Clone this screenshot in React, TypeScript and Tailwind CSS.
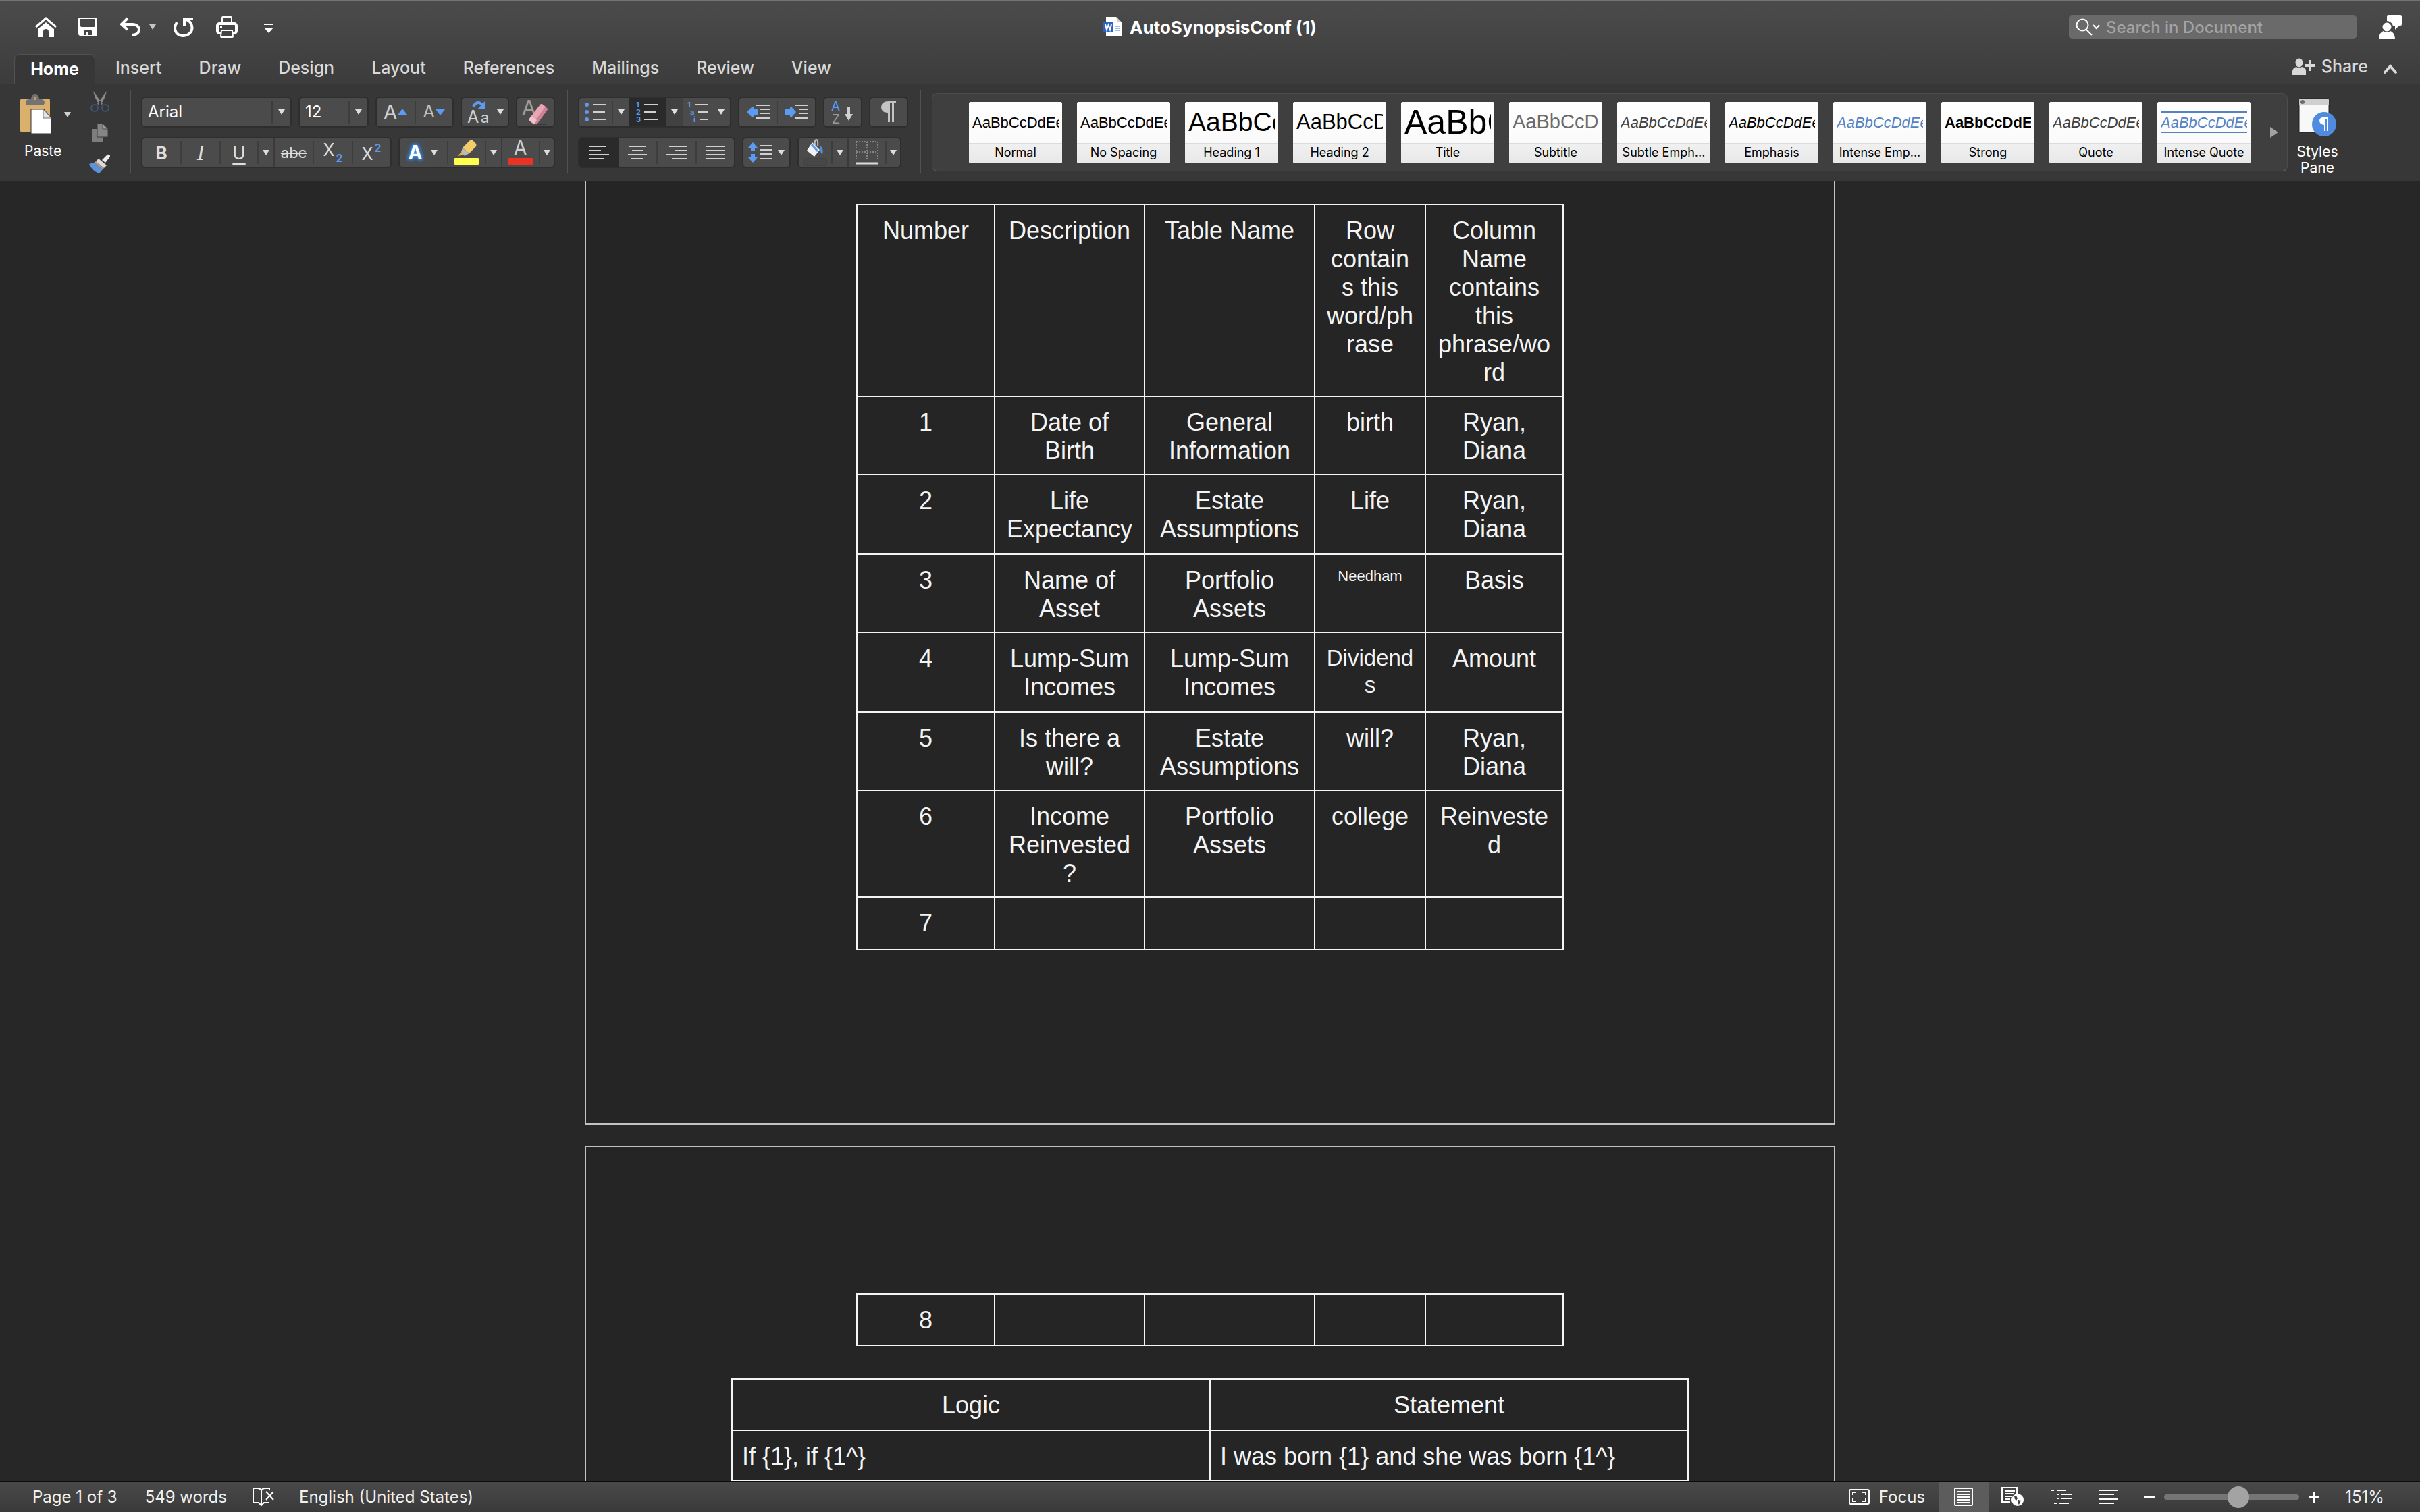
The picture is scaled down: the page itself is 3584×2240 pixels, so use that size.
import React from "react";

type Kids = { children?: React.ReactNode };

const Caret = ({ className = "" }: { className?: string }) => (
  <svg width="12" height="10" viewBox="0 0 12 10" className={`shrink-0 ${className}`} aria-hidden="true">
    <path d="M1 1H11L6 9Z" fill="currentColor" />
  </svg>
);

const Svg = ({ w, h, children, className = "" }: Kids & { w: number; h: number; className?: string }) => (
  <svg width={w} height={h} viewBox={`0 0 ${w} ${h}`} fill="none" className={`shrink-0 overflow-visible ${className}`} aria-hidden="true">
    {children}
  </svg>
);

/* ---------- Quick access toolbar icons ---------- */

const HomeIcon = () => (
  <Svg w={32} h={30}>
    <path d="M1 15L16 2L31 15" stroke="#fff" strokeWidth="3" />
    <path d="M4 18L16 8L28 18V30H20V22Q20 18 16 18Q12 18 12 22V30H4Z" fill="#fff" />
  </Svg>
);
const SaveIcon = () => (
  <Svg w={28} h={28}>
    <path
      fillRule="evenodd"
      d="M2 0H26Q28 0 28 2V26Q28 28 26 28H3L0 25V2Q0 0 2 0ZM3 2V12Q3 14 5 14H23Q25 14 25 12V2ZM9 19Q8 19 8 20V26H12V22H15V26H20V20Q20 19 19 19Z"
      fill="#fff"
    />
  </Svg>
);
const UndoIcon = () => (
  <Svg w={32} h={30}>
    <path d="M12 2L3 11L12 19" stroke="#fff" strokeWidth="4" />
    <path d="M3 11H19C32 11 33 27 18 27" stroke="#fff" strokeWidth="4" />
  </Svg>
);
const RepeatIcon = () => (
  <Svg w={32} h={32}>
    <path d="M6 9C-2 22 8 29 15 29C25 29 30 21 28 14C27 9 24 6 18 4" stroke="#fff" strokeWidth="4" />
    <path d="M30 4H17V14" stroke="#fff" strokeWidth="4" />
  </Svg>
);
const PrintIcon = () => (
  <Svg w={32} h={32}>
    <path d="M9 10V2Q9 1 10 1H22Q23 1 23 2V10" stroke="#fff" strokeWidth="2" />
    <rect x="2" y="11" width="28" height="14" rx="3" fill="#464646" stroke="#fff" strokeWidth="4" />
    <rect x="6" y="15" width="3" height="3" fill="#fff" />
    <path d="M8 21H24L25 30Q25 31 24 31H8Q7 31 7 30Z" fill="#444" stroke="#fff" strokeWidth="2" />
  </Svg>
);
const CustomizeIcon = () => (
  <Svg w={16} h={16}>
    <path d="M1 2H15" stroke="#fff" strokeWidth="2" />
    <path d="M1 7H15L8 15Z" fill="#fff" />
  </Svg>
);
const WordFileIcon = () => (
  <Svg w={28} h={30}>
    <path d="M4 0H19L27 8V29H4Z" fill="#fff" />
    <path d="M19 0L21 7L27 8Z" fill="#cfcfcf" />
    <path d="M17 14H24M17 17H24M17 20H24" stroke="#3b7ddd" strokeWidth="1" />
    <rect x="0" y="8" width="15" height="15" rx="1" fill="#2b63c1" />
    <path d="M3 11L5 19L7.500 12L10 19L12 11" stroke="#fff" strokeWidth="2" />
  </Svg>
);
const PersonIcon = () => (
  <Svg w={36} h={36}>
    <path d="M13 2Q13 0 15 0H33Q35 0 35 2V14Q35 16 33 16H31L25 22V16H13Z" fill="#fff" />
    <circle cx="13" cy="18" r="9" fill="#444" />
    <circle cx="13" cy="18" r="6.500" fill="#fff" />
    <path d="M1 36C1 28 5 25 8 24Q13 28 18 24C21 25 25 28 25 36Z" fill="#fff" />
  </Svg>
);
const ShareIcon = () => (
  <Svg w={34} h={26}>
    <ellipse cx="10" cy="7" rx="5.500" ry="6.500" fill="#d8d8d8" />
    <path d="M0 25V19Q1 14 6 13Q10 16 14 13Q20 14 20 19V25Z" fill="#d8d8d8" />
    <path d="M18 11H34M26 3V19" stroke="#d8d8d8" strokeWidth="4" />
  </Svg>
);

/* ---------- Ribbon building blocks ---------- */

const Group = ({ children, className = "" }: Kids & { className?: string }) => (
  <div className={`flex h-[46px] shrink-0 items-stretch overflow-hidden rounded-[6px] border-2 border-[#2e2e2e] bg-[#4b4b4b] ${className}`}>{children}</div>
);
const Sep = ({ full = false }: { full?: boolean }) => (
  <span className={full ? "w-[2px] shrink-0 bg-[#3a3a3a]" : "my-[4px] w-[2px] shrink-0 bg-[#3d3d3d]"} />
);
const Btn = ({ label, children, className = "" }: Kids & { label: string; className?: string }) => (
  <button type="button" aria-label={label} className={`flex shrink-0 items-center justify-center text-[#dedede] ${className}`}>
    {children}
  </button>
);
const Divider = () => <span className="mt-[9px] h-[123px] w-[2px] shrink-0 bg-[#525252]" />;

const B = "#5b9bf3";
const G = "#d0d0d0";

const Lines = ({ d, w, h }: { d: string; w: number; h: number }) => (
  <Svg w={w} h={h}>
    <path d={d} stroke={G} strokeWidth="2" />
  </Svg>
);

const Clipboard = () => (
  <Svg w={48} h={60}>
    <rect x="0" y="6" width="44" height="50" rx="3" fill="#d9b06c" />
    <path d="M8 12Q8 7 14 7H16Q16 0 22 0Q28 0 28 7H30Q36 7 36 12Q36 16 31 16H13Q8 16 8 12Z" fill="#737373" />
    <circle cx="22" cy="6" r="2" fill="#c9a262" />
    <path d="M16 22H35L46 35V58H16Z" fill="#fff" stroke="#333" strokeWidth="1" />
    <path d="M34 22V35H46Z" fill="#e4e4e4" stroke="#777" strokeWidth="1" />
  </Svg>
);
const Scissors = () => (
  <Svg w={30} h={32}>
    <path d="M5 1L19 20L15 22Q7 12 5 1ZM25 1L11 20L15 22Q23 12 25 1Z" fill="#8a8a8a" />
    <circle cx="7" cy="26" r="5" stroke="#3c5478" strokeWidth="2" />
    <circle cx="23" cy="26" r="5" stroke="#3c5478" strokeWidth="2" />
  </Svg>
);
const CopyIcon = () => (
  <Svg w={26} h={30}>
    <path d="M1 9H17V29H1Z" fill="#7d7d7d" />
    <path d="M9 1H18L25 9V21H9Z" fill="#858585" stroke="#3a3a3a" strokeWidth="1" />
    <path d="M17 1V9H25Z" fill="#9a9a9a" stroke="#4a4a4a" strokeWidth="1" />
  </Svg>
);
const BrushIcon = () => (
  <Svg w={32} h={30}>
    <path d="M27 1Q31 0 31 4L24 13L19 9Z" fill="#ececec" />
    <path d="M14 7L26 17L22 21L10 11Z" fill="#dcdcdc" />
    <path d="M10 11L22 21L20 23L7 13Z" fill="#b79a78" />
    <path d="M7 13L20 23L15 29Q4 25 0 15Z" fill="#5b94dd" />
  </Svg>
);
const EraserIcon = () => (
  <Svg w={42} h={40}>
    <text x="1" y="24" fontFamily="Inter" fontSize="30" fill="#9d9d98">A</text>
    <path d="M12 30L28 9Q30 7 32 9L38 14Q40 16 38 18L24 37Q21 39 18 37L12 33Q10 32 12 30Z" fill="#cf8194" />
    <path d="M12 30L28 9Q30 7 32 9L36 12L19 34Z" fill="#e9a5b5" />
    <path d="M12 30L15 26L23 32L20 37Q18 38 16 36L12 33Q10 32 12 30Z" fill="#efc3cd" />
    <path d="M24 38H38" stroke="#2c2c2c" strokeWidth="1" />
  </Svg>
);
const BulletsIcon = () => (
  <Svg w={34} h={30}>
    <g fill={B}><circle cx="4" cy="4" r="3" /><circle cx="4" cy="15" r="3" /><circle cx="4" cy="26" r="3" /></g>
    <path d="M13 4H33M13 15H31M13 26H33" stroke={G} strokeWidth="2" />
  </Svg>
);
const NumbersIcon = () => (
  <Svg w={34} h={30}>
    <g fill={B} fontFamily="Inter" fontSize="11" fontWeight="700"><text x="0" y="8">1</text><text x="0" y="19">2</text><text x="0" y="30">3</text></g>
    <path d="M12 4H32M12 15H30M12 26H32" stroke={G} strokeWidth="2" />
  </Svg>
);
const MultiIcon = () => (
  <Svg w={34} h={30}>
    <g fill={B} fontFamily="Inter" fontSize="11" fontWeight="700"><text x="0" y="8">1</text><text x="4" y="19">a</text><text x="9" y="30">i</text></g>
    <path d="M11 4H31M15 15H31M19 26H31" stroke={G} strokeWidth="2" />
  </Svg>
);
const IndentIcon = ({ right = false }: { right?: boolean }) => (
  <Svg w={36} h={24}>
    <path d={right ? "M17 12L10 4H8V8H1V16H8V20H10Z" : "M1 12L9 4H11V8H17V16H11V20H9Z"} fill={B} />
    <path d="M15 2H35M21 8H35M21 14H35M15 21H35" stroke={G} strokeWidth="2" />
  </Svg>
);
const SortIcon = () => (
  <Svg w={36} h={38}>
    <text x="1" y="17" fontFamily="Inter" fontSize="19" fill={B}>A</text>
    <text x="2" y="36" fontFamily="Inter" fontSize="19" fill="#9a9a9a">Z</text>
    <path d="M27 11V24" stroke={G} strokeWidth="4" />
    <path d="M21 22H33L27 32Z" fill={G} />
  </Svg>
);
const SpacingIcon = () => (
  <Svg w={38} h={30}>
    <path d="M8 0L15 8V9H11V13H5V9H1V8ZM8 30L15 22V21H11V17H5V21H1V22Z" fill={B} />
    <path d="M19 5H37M19 11H37M19 17H37M19 24H37" stroke={G} strokeWidth="2" />
  </Svg>
);
const BucketIcon = () => (
  <Svg w={36} h={40}>
    <path d="M14 5L25 16L17 26L6 17Z" fill="#f2f2f2" />
    <path d="M18 9Q17 1 20 1Q23 1 22 11" stroke="#bdbdbd" strokeWidth="2" />
    <path d="M13 8L22 18" stroke={B} strokeWidth="3" />
    <path d="M24 10Q32 12 29 23Q26 21 26 15Z" fill="#4f8fe8" />
    <rect x="1" y="29" width="34" height="10" rx="2" fill="#474747" stroke="#3a3a3a" />
  </Svg>
);
const BordersIcon = () => (
  <Svg w={36} h={36}>
    <path d="M2 2H34M2 17H34M2 2V31M18 2V31M34 2V31" stroke="#858585" strokeWidth="2" strokeDasharray="2 2" />
    <path d="M1 34H35" stroke="#dcdcdc" strokeWidth="3" />
  </Svg>
);
const HighlightIcon = () => (
  <Svg w={38} h={38}>
    <path d="M24 1Q26 0 28 1L33 6Q34 8 33 10L23 20L13 12Z" fill="#f3cd69" />
    <path d="M13 12L23 20L16 24L11 18Z" fill="#b9b9b9" />
    <path d="M11 18L15 22L6 24Z" fill="#e0b34c" />
    <rect x="1" y="27" width="36" height="10" rx="1" fill="#ffff4f" />
  </Svg>
);
const FontColorIcon = () => (
  <Svg w={38} h={38}>
    <text x="9" y="22" fontFamily="Inter" fontSize="28" fill={G}>A</text>
    <rect x="1" y="27" width="36" height="10" rx="1" fill="#e93323" />
  </Svg>
);
const StylesPaneIcon = () => (
  <Svg w={58} h={60}>
    <path d="M2 3Q2 1 4 1H44Q46 1 46 3V51H2Z" fill="#f8f8f8" stroke="#222" strokeWidth="1" />
    <path d="M2 3Q2 1 4 1H44Q46 1 46 3V11H2Z" fill="#cfcfcf" />
    <circle cx="7" cy="6" r="3" fill="#6b6b6b" />
    <circle cx="39" cy="39" r="18" fill="#4f8ce0" />
    <path d="M38 29H45V49H43V31H41V49H39V40Q32 39 32 34Q32 29 38 29Z" fill="#fff" />
  </Svg>
);

/* ---------- Data ---------- */

const tabs = ["Insert", "Draw", "Design", "Layout", "References", "Mailings", "Review", "View"];

const styles: { name: string; cls: string; ruled?: boolean }[] = [
  { name: "Normal", cls: "text-[22px] text-black" },
  { name: "No Spacing", cls: "text-[22px] text-black" },
  { name: "Heading 1", cls: "text-[39px] text-black" },
  { name: "Heading 2", cls: "text-[31px] text-black" },
  { name: "Title", cls: "text-[50px] text-black" },
  { name: "Subtitle", cls: "text-[29px] text-[#6b6b6b]" },
  { name: "Subtle Emph...", cls: "text-[22px] italic text-[#404040]" },
  { name: "Emphasis", cls: "text-[22px] italic text-black" },
  { name: "Intense Emp...", cls: "text-[22px] italic text-[#5482c4]" },
  { name: "Strong", cls: "text-[22px] font-bold text-black" },
  { name: "Quote", cls: "text-[22px] italic text-[#404040]" },
  { name: "Intense Quote", cls: "text-[22px] italic text-[#5482c4]", ruled: true },
];

const head = ["Number", "Description", "Table Name", "Row\ncontain\ns this\nword/ph\nrase", "Column\nName\ncontains\nthis\nphrase/wo\nrd"];
const rows: { h: string; cells: string[] }[] = [
  { h: "h-[116px]", cells: ["1", "Date of\nBirth", "General\nInformation", "birth", "Ryan,\nDiana"] },
  { h: "h-[118px]", cells: ["2", "Life\nExpectancy", "Estate\nAssumptions", "Life", "Ryan,\nDiana"] },
  { h: "h-[116px]", cells: ["3", "Name of\nAsset", "Portfolio\nAssets", "Needham", "Basis"] },
  { h: "h-[118px]", cells: ["4", "Lump-Sum\nIncomes", "Lump-Sum\nIncomes", "Dividend\ns", "Amount"] },
  { h: "h-[116px]", cells: ["5", "Is there a\nwill?", "Estate\nAssumptions", "will?", "Ryan,\nDiana"] },
  { h: "h-[158px]", cells: ["6", "Income\nReinvested\n?", "Portfolio\nAssets", "college", "Reinveste\nd"] },
  { h: "h-[78px]", cells: ["7", "", "", "", ""] },
];
const cell = "border-2 border-[#f4f4f4] pt-[17px] pb-[13px] align-top font-normal whitespace-pre-line";
const cellSize: Record<string, string> = {
  Needham: "text-[22px] leading-[30px]",
  "Dividend\ns": "text-[33px] leading-[40px]",
};

const Cols = () => (
  <colgroup>
    <col className="w-[204px]" />
    <col className="w-[222px]" />
    <col className="w-[252px]" />
    <col className="w-[164px]" />
    <col className="w-[204px]" />
  </colgroup>
);

/* ---------- Sections ---------- */

function TitleBar() {
  return (
    <div className="grid h-[76px] grid-cols-[1fr_auto_1fr] items-center px-[26px]">
      <div className="ml-[26px] flex items-center">
        <button type="button" aria-label="Home"><HomeIcon /></button>
        <button type="button" aria-label="Save" className="ml-[32px]"><SaveIcon /></button>
        <button type="button" aria-label="Undo" className="ml-[33px] flex items-center gap-[11px] text-[#c4c4c4]"><UndoIcon /><Caret /></button>
        <button type="button" aria-label="Repeat" className="ml-[24px]"><RepeatIcon /></button>
        <button type="button" aria-label="Print" className="ml-[32px]"><PrintIcon /></button>
        <button type="button" aria-label="Customize toolbar" className="mt-[4px] ml-[38px]"><CustomizeIcon /></button>
      </div>
      <h1 className="flex items-center gap-[11px] text-[26px] font-bold text-white"><WordFileIcon />AutoSynopsisConf (1)</h1>
      <div className="flex items-center justify-end gap-[32px]">
        <label className="flex h-[36px] w-[426px] items-center rounded-[5px] bg-[#6a6a6a] pl-[10px]">
          <Svg w={36} h={26}>
            <circle cx="10" cy="10" r="8.500" stroke="#fff" strokeWidth="2" />
            <path d="M16 17L24 25" stroke="#fff" strokeWidth="2" />
            <path d="M26 10L30.500 15L35 10" stroke="#fff" strokeWidth="2" />
          </Svg>
          <input type="text" aria-label="Search in Document" placeholder="Search in Document" className="ml-[9px] w-full min-w-0 bg-transparent pt-[2px] text-[24px] font-medium text-white outline-none placeholder:text-[#a3a3a3]" />
        </label>
        <button type="button" aria-label="Account"><PersonIcon /></button>
      </div>
    </div>
  );
}

function TabBar() {
  return (
    <div className="flex h-[47px] items-stretch border-b border-[#5f5f5f] pl-[21px] text-[25px] text-[#d8d8d8]">
      <button type="button" className="mt-[2px] -mb-px w-[120px] rounded-t-[8px] border border-b-0 border-[#525252] bg-[#373737] font-bold text-white">Home</button>
      <nav className="ml-[30px] flex items-center gap-[55px] font-medium">
        {tabs.map((t) => (
          <button key={t} type="button">{t}</button>
        ))}
      </nav>
      <div className="mr-[33px] mb-[5px] ml-auto flex items-center">
        <button type="button" className="flex items-center gap-[9px] font-medium"><ShareIcon />Share</button>
        <button type="button" aria-label="Collapse ribbon" className="mt-[6px] ml-[22px]">
          <Svg w={22} h={16}><path d="M3 13L11 4L19 13" stroke="#d8d8d8" strokeWidth="4" strokeLinecap="round" /></Svg>
        </button>
      </div>
    </div>
  );
}

function FontGroup() {
  return (
    <div className="mt-[18px] ml-[15px] flex shrink-0 flex-col gap-[14px]">
      <div className="flex gap-[10px]">
        <Group className="w-[223px]">
          <select aria-label="Font" className="min-w-0 flex-1 appearance-none pl-[8px] text-[24px] text-white"><option>Arial</option></select>
          <Sep />
          <span className="flex w-[26px] items-center justify-center text-[#dedede]"><Caret /></span>
        </Group>
        <Group className="w-[104px]">
          <select aria-label="Font size" className="min-w-0 flex-1 appearance-none pl-[8px] text-[24px] text-white"><option>12</option></select>
          <Sep />
          <span className="flex w-[26px] items-center justify-center text-[#dedede]"><Caret /></span>
        </Group>
        <Group className="w-[116px]">
          <Btn label="Grow font" className="w-[56px]">
            <span className="text-[30px] text-[#d0d0d0]">A</span>
            <Svg w={16} h={12}><path d="M1 10L8 1L15 10Z" fill={B} /></Svg>
          </Btn>
          <Sep />
          <Btn label="Shrink font" className="w-[54px]">
            <span className="text-[25px] text-[#c0c0c0]">A</span>
            <Svg w={16} h={12}><path d="M1 2L8 11L15 2Z" fill={B} /></Svg>
          </Btn>
        </Group>
        <Group className="w-[72px]">
          <Btn label="Change case" className="flex-1 gap-[8px]">
            <Svg w={38} h={38}>
              <text x="3" y="35" fontFamily="Inter" fontSize="25" fill={G}>A</text>
              <text x="23" y="35" fontFamily="Inter" fontSize="22" fill={G}>a</text>
              <path d="M12 11Q18 0 26 9" stroke={B} strokeWidth="4" />
              <path d="M30 2V15H18Z" fill={B} />
            </Svg>
            <Caret />
          </Btn>
        </Group>
        <Group className="w-[58px]"><Btn label="Clear formatting" className="flex-1"><EraserIcon /></Btn></Group>
      </div>
      <div className="flex gap-[10px]">
        <Group className="w-[371px]">
          <Btn label="Bold" className="w-[56px] text-[26px] font-bold text-[#c9c9c9]">B</Btn>
          <Sep />
          <Btn label="Italic" className="w-[56px] font-['Liberation_Serif',serif] text-[32px] text-[#c9c9c9] italic">I</Btn>
          <Sep />
          <Btn label="Underline" className="w-[54px] text-[26px] text-[#c9c9c9] underline decoration-2 underline-offset-[6px]">U</Btn>
          <Sep />
          <Btn label="Underline style" className="w-[22px]"><Caret /></Btn>
          <Sep full />
          <Btn label="Strikethrough" className="w-[56px] text-[22px] text-[#c9c9c9] line-through">abc</Btn>
          <Sep />
          <Btn label="Subscript" className="w-[56px] gap-[2px] text-[25px] text-[#c9c9c9]"><span className="mb-[6px]">X</span><span className="mt-[16px] text-[16px] font-semibold text-[#5b9bf3]">2</span></Btn>
          <Sep />
          <Btn label="Superscript" className="w-[54px] gap-[2px] text-[25px] text-[#c9c9c9]"><span className="mt-[6px]">X</span><span className="mb-[14px] text-[16px] font-semibold text-[#5b9bf3]">2</span></Btn>
        </Group>
        <Group className="w-[232px]">
          <Btn label="Text effects" className="w-[70px] gap-[12px]">
            <span className="text-[28px] font-bold text-white [text-shadow:0_0_5px_#2f8cf5,0_0_5px_#2f8cf5,0_0_8px_#2f8cf5]">A</span>
            <Caret />
          </Btn>
          <Sep />
          <Btn label="Highlight" className="w-[54px]"><HighlightIcon /></Btn>
          <Sep />
          <Btn label="Highlight colour" className="w-[22px]"><Caret /></Btn>
          <Sep full />
          <Btn label="Font colour" className="w-[54px]"><FontColorIcon /></Btn>
          <Sep />
          <Btn label="Font colour menu" className="w-[20px]"><Caret /></Btn>
        </Group>
      </div>
    </div>
  );
}

function ParagraphGroup() {
  return (
    <div className="mt-[18px] ml-[15px] flex shrink-0 flex-col gap-[14px]">
      <div className="flex gap-[10px]">
        <Group className="w-[227px]">
          <Btn label="Bullets" className="w-[48px]"><BulletsIcon /></Btn>
          <Sep />
          <Btn label="Bullets menu" className="w-[23px]"><Caret /></Btn>
          <Btn label="Numbering" className="w-[56px] bg-[#2a2a2a]"><NumbersIcon /></Btn>
          <Btn label="Numbering menu" className="w-[24px] bg-[#414141]"><Caret /></Btn>
          <Btn label="Multilevel list" className="flex-1 gap-[10px]"><MultiIcon /><Caret /></Btn>
        </Group>
        <Group className="w-[116px]">
          <Btn label="Decrease indent" className="w-[55px]"><IndentIcon /></Btn>
          <Sep />
          <Btn label="Increase indent" className="w-[55px]"><IndentIcon right /></Btn>
        </Group>
        <Group className="w-[58px]"><Btn label="Sort" className="flex-1"><SortIcon /></Btn></Group>
        <Group className="w-[58px]">
          <Btn label="Show marks" className="flex-1">
            <Svg w={24} h={32}><path d="M12 0H23V2H20V31H17V2H14V31H11V17H10Q1 16 1 9Q1 0 12 0Z" fill="#c4c4c4" /></Svg>
          </Btn>
        </Group>
      </div>
      <div className="flex gap-[10px]">
        <Group className="w-[233px]">
          <Btn label="Align left" className="w-[58px] bg-[#2a2a2a]"><Lines w={32} h={22} d="M1 2H27M1 8H19M1 14H31M1 20H23" /></Btn>
          <Btn label="Center" className="w-[56px]"><Lines w={32} h={22} d="M4 2H28M8 8H24M2 14H30M7 20H25" /></Btn>
          <Sep />
          <Btn label="Align right" className="w-[56px]"><Lines w={32} h={22} d="M5 2H31M13 8H31M1 14H31M9 20H31" /></Btn>
          <Sep />
          <Btn label="Justify" className="flex-1"><Lines w={32} h={22} d="M2 2H30M2 8H30M2 14H30M2 20H30" /></Btn>
        </Group>
        <Group className="w-[72px]"><Btn label="Line spacing" className="flex-1 gap-[6px]"><SpacingIcon /><Caret /></Btn></Group>
        <Group className="w-[154px]">
          <Btn label="Shading" className="w-[48px]"><BucketIcon /></Btn>
          <Sep />
          <Btn label="Shading menu" className="w-[22px]"><Caret /></Btn>
          <Sep full />
          <Btn label="Borders" className="w-[54px]"><BordersIcon /></Btn>
          <Sep />
          <Btn label="Borders menu" className="w-[20px]"><Caret /></Btn>
        </Group>
      </div>
    </div>
  );
}

function StyleGallery() {
  return (
    <div className="mt-[13px] ml-[16px] flex h-[116px] shrink-0 items-center rounded-[8px] border border-[#4c4c4c] border-b-[#636363] bg-[#3f3f3f] pr-[12px] pl-[54px]">
      <div className="flex gap-[22px]">
        {styles.map((s) => (
          <button key={s.name} type="button" className="flex w-[138px] flex-col overflow-hidden rounded-[3px] bg-white">
            <span className="flex h-[61px] items-center bg-linear-to-b from-white to-[#fafafa] px-[5px]">
              <span className={s.ruled ? "flex h-[32px] w-full items-center overflow-hidden border-y-2 border-[#5482c4]" : "flex h-[60px] w-full items-center overflow-hidden"}>
                <span className={`font-['Liberation_Sans',Arial,sans-serif] whitespace-nowrap ${s.cls}`}>AaBbCcDdEe</span>
              </span>
            </span>
            <span className="flex h-[30px] items-center justify-center border-t border-[#dcdcdc] bg-linear-to-b from-[#f0f0f0] to-[#e8e8e8] pb-[3px] text-[18px] whitespace-nowrap text-black">{s.name}</span>
          </button>
        ))}
      </div>
      <button type="button" aria-label="More styles" className="ml-[28px]">
        <Svg w={14} h={18}><path d="M1 1L13 9L1 17Z" fill="#a2a2a2" /></Svg>
      </button>
    </div>
  );
}

function Ribbon() {
  return (
    <div className="flex h-[143px] items-start bg-[#373737] text-[21px] text-white">
      <div className="flex w-[192px] shrink-0 items-start">
        <button type="button" className="mt-[15px] ml-[30px] flex w-[76px] flex-col">
          <span className="flex w-full items-center justify-between text-[#d0d0d0]"><Clipboard /><Caret /></span>
          <span className="mt-[11px] ml-[6px] self-start leading-[26px]">Paste</span>
        </button>
        <div className="mt-[9px] ml-[26px] flex flex-col items-center gap-[16px]">
          <button type="button" aria-label="Cut"><Scissors /></button>
          <button type="button" aria-label="Copy"><CopyIcon /></button>
          <button type="button" aria-label="Format painter"><BrushIcon /></button>
        </div>
      </div>
      <Divider />
      <FontGroup />
      <span className="w-[17px] shrink-0" />
      <Divider />
      <ParagraphGroup />
      <span className="w-[17px] shrink-0" />
      <Divider />
      <StyleGallery />
      <button type="button" className="mt-[20px] ml-[12px] flex w-[64px] flex-col items-center">
        <StylesPaneIcon />
        <span className="mt-[8px] leading-[24px]">Styles Pane</span>
      </button>
    </div>
  );
}

function DocumentArea() {
  return (
    <main className="flex flex-1 flex-col items-center gap-[32px] overflow-hidden bg-[#272727] font-['Liberation_Sans',Arial,sans-serif] text-[36px] leading-[42px] text-[#f4f4f4]">
      <section className="flex w-[1852px] max-w-full shrink-0 flex-col items-center border-2 border-t-0 border-[#c2c2c2] bg-[#252525] pt-[34px] pb-[256px]">
        <table className="table-fixed w-[1048px] border-collapse text-center">
          <Cols />
          <thead>
            <tr className="h-[284px]">
              {head.map((h) => <th key={h} scope="col" className={cell}>{h}</th>)}
            </tr>
          </thead>
          <tbody>
            {rows.map((r) => (
              <tr key={r.cells[0]} className={r.h}>
                {r.cells.map((c, i) => <td key={i} className={`${cell} ${cellSize[c] ?? ""}`}>{c}</td>)}
              </tr>
            ))}
          </tbody>
        </table>
      </section>
      <section className="flex w-[1852px] max-w-full shrink-0 flex-col items-center gap-[48px] border-2 border-[#c2c2c2] bg-[#252525] pt-[216px] pb-[200px]">
        <table className="table-fixed w-[1048px] border-collapse text-center">
          <Cols />
          <tbody>
            <tr className="h-[76px]">
              {["8", "", "", "", ""].map((c, i) => <td key={i} className={cell}>{c}</td>)}
            </tr>
          </tbody>
        </table>
        <table className="table-fixed w-[1418px] border-collapse">
          <thead>
            <tr className="h-[76px]">
              <th scope="col" className={cell}>Logic</th>
              <th scope="col" className={cell}>Statement</th>
            </tr>
          </thead>
          <tbody>
            <tr className="h-[74px]">
              <td className={`${cell} pl-[14px]`}>{"If {1}, if {1^}"}</td>
              <td className={`${cell} pl-[14px]`}>{"I was born {1} and she was born {1^}"}</td>
            </tr>
          </tbody>
        </table>
      </section>
    </main>
  );
}

function StatusBar() {
  return (
    <footer className="flex h-[46px] shrink-0 items-stretch border-t-2 border-[#0c0c0c] bg-linear-to-b from-[#494949] to-[#3a3a3a] pr-[52px] pl-[48px] text-[24px] text-[#f0f0f0]">
      <button type="button">Page 1 of 3</button>
      <button type="button" className="ml-[41px]">549 words</button>
      <button type="button" aria-label="Proofing" className="ml-[38px]">
        <Svg w={32} h={28}>
          <path d="M13 4Q11 1 8 1H1V22H9L13 26L17 22H24M13 4V25M13 4Q15 1 18 1H25V4" stroke="#fff" strokeWidth="2" />
          <path d="M20 6L31 18M31 6L20 18" stroke="#fff" strokeWidth="2" />
        </Svg>
      </button>
      <button type="button" className="ml-[37px]">English (United States)</button>
      <div className="ml-auto flex items-stretch">
        <button type="button" className="flex items-center gap-[13px]">
          <Svg w={32} h={24}>
            <rect x="1" y="1" width="29" height="21" rx="2" stroke="#fff" strokeWidth="2" />
            <path d="M6 9V5H11M20 5H25V9M25 14V18H20M11 18H6V14" stroke="#fff" strokeWidth="2" />
          </Svg>
          Focus
        </button>
        <button type="button" aria-label="Print layout" className="ml-[20px] flex w-[74px] items-center justify-center bg-[#5c5c5c]">
          <Svg w={28} h={28}>
            <rect x="1" y="1" width="26" height="25" rx="1" stroke="#fff" strokeWidth="2" />
            <path d="M5 6H23M5 10H23M5 14H23M5 18H23M5 22H23" stroke="#fff" strokeWidth="2" />
          </Svg>
        </button>
        <button type="button" aria-label="Web layout" className="ml-[19px]">
          <Svg w={34} h={30}>
            <path d="M13 22H1V1H23V10M5 6H20M5 10H18M5 14H16M5 18H13" stroke="#fff" strokeWidth="2" />
            <circle cx="24" cy="19" r="9" fill="#fff" />
            <path d="M19 14L22 13L24 17L22 20L20 18ZM25 19L29 20L26 26L24 23Z" fill="#444" />
          </Svg>
        </button>
        <button type="button" aria-label="Outline" className="ml-[40px]">
          <Svg w={32} h={24}>
            <path d="M0 2H4M8 2H22M8 8H12M15 8H30M8 14H12M15 14H30M4 21H8M11 21H26" stroke="#fff" strokeWidth="2" />
          </Svg>
        </button>
        <button type="button" aria-label="Draft" className="ml-[38px]">
          <Svg w={30} h={24}><path d="M1 2H29M1 8H23M1 15H29M1 21H23" stroke="#fff" strokeWidth="2" /></Svg>
        </button>
        <button type="button" aria-label="Zoom out" className="ml-[36px]">
          <Svg w={18} h={18}><path d="M1 9H17" stroke="#fff" strokeWidth="4" /></Svg>
        </button>
        <input
          type="range"
          aria-label="Zoom"
          defaultValue={56}
          className="ml-[13px] w-[200px] appearance-none bg-transparent [&::-webkit-slider-runnable-track]:h-[8px] [&::-webkit-slider-runnable-track]:rounded-[4px] [&::-webkit-slider-runnable-track]:bg-[#757575] [&::-webkit-slider-thumb]:mt-[-12px] [&::-webkit-slider-thumb]:size-[32px] [&::-webkit-slider-thumb]:appearance-none [&::-webkit-slider-thumb]:rounded-full [&::-webkit-slider-thumb]:bg-[#a3a3a3]"
        />
        <button type="button" aria-label="Zoom in" className="ml-[13px]">
          <Svg w={18} h={18}><path d="M1 9H17M9 1V17" stroke="#fff" strokeWidth="4" /></Svg>
        </button>
        <button type="button" className="ml-[36px] w-[60px] whitespace-nowrap">151%</button>
      </div>
    </footer>
  );
}

export default function App() {
  return (
    <div className="flex h-screen flex-col overflow-hidden bg-[#272727] font-['Inter',sans-serif]">
      <header className="shrink-0">
        <div className="border-t-2 border-[#737373] bg-linear-to-b from-[#4b4b4b] to-[#3c3c3c]">
          <TitleBar />
          <TabBar />
        </div>
        <Ribbon />
      </header>
      <DocumentArea />
      <StatusBar />
    </div>
  );
}
